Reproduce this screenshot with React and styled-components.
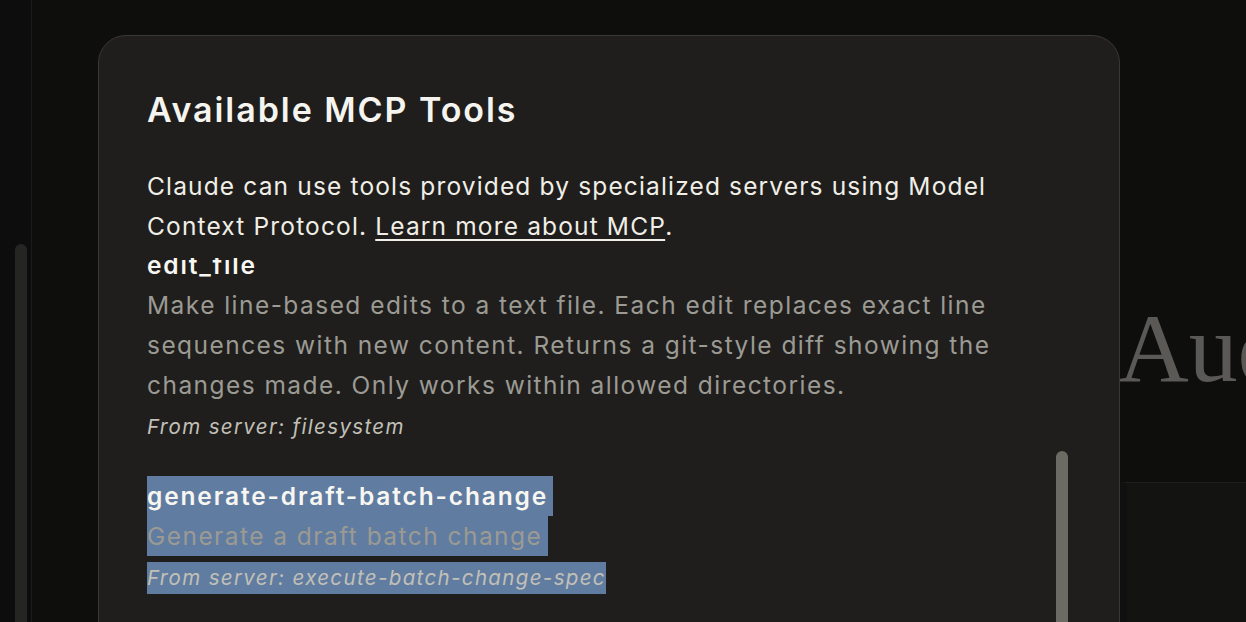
import React, { useLayoutEffect, useRef } from 'react'
import styled, { createGlobalStyle } from 'styled-components'

const GlobalStyle = createGlobalStyle`
  html, body {
    margin: 0;
    padding: 0;
    background: #0e0e0d;
    overflow: hidden;
  }
  * {
    box-sizing: border-box;
  }
`

const Page = styled.div`
  position: relative;
  display: flex;
  width: 1246px;
  height: 622px;
  overflow: hidden;
  font-family: Inter, "Noto Sans", sans-serif;
`

const Sidebar = styled.aside`
  width: 32px;
  flex-shrink: 0;
  padding: 244px 0 0 15px;
  background: #0d0d0d;
  border-right: 1px solid #1b1b1a;
`

const SidebarThumb = styled.div`
  width: 12px;
  height: 420px;
  border-radius: 6px;
  background: #252524;
`

const Main = styled.main`
  flex: 1;
  display: flex;
  flex-direction: column;
`

const Hero = styled.section`
  height: 482px;
  flex-shrink: 0;
  padding: 299px 0 0 1086px;
  overflow: hidden;
`

const HeroTitle = styled.h1`
  margin: 0;
  font-family: "Liberation Serif", "DejaVu Serif", serif;
  font-weight: 400;
  font-size: 98px;
  line-height: 1;
  color: #5a5955;
  white-space: nowrap;
`

const Lower = styled.section`
  flex: 1;
  margin-left: 1088px;
  background: #131312;
  border-top: 1px solid #1f1f1e;
  border-left: 7px solid #101011;
`

const Modal = styled.div`
  position: absolute;
  left: 98px;
  top: 35px;
  width: 1022px;
  height: 640px;
  display: flex;
  flex-direction: column;
  padding: 54px 92px 0 48px;
  background: #1f1e1d;
  border: 1px solid #393835;
  border-radius: 28px;
`

const Title = styled.h2`
  margin: 0;
  font-size: 34px;
  line-height: 40px;
  font-weight: 600;
  color: #f5f4ef;
  letter-spacing: 1.95px;
`

const Intro = styled.p`
  margin: 36px 0 0;
  font-size: 24.5px;
  line-height: 40px;
  color: #f0eee6;
  letter-spacing: 1.15px;
`

const Link = styled.a`
  color: inherit;
  text-decoration: underline;
  text-underline-offset: 4px;
  text-decoration-thickness: 2px;
`

const ToolList = styled.div`
  position: relative;
  flex: 1;
  margin-top: 12px;
  overflow: hidden;
`

const Tool = styled.div`
  margin-bottom: 33px;
`

const ToolName = styled.div`
  font-size: 24.5px;
  line-height: 40px;
  font-weight: 600;
  color: #f7f6f1;
  letter-spacing: 1.85px;
`

const ToolDesc = styled.div`
  font-size: 24.5px;
  line-height: 40px;
  color: #9b9a93;
  letter-spacing: 1.45px;
`

const ToolServer = styled.div`
  margin-top: 6px;
  font-size: 20.5px;
  line-height: 32px;
  font-style: italic;
  color: #c2c0b7;
  letter-spacing: 1.35px;
`

const Highlight = styled.span`
  display: inline-block;
  margin-left: -1px;
  padding: 0 ${(p) => p.$pad || 0}px 0 1px;
  background: #617ca1;
`

const ModalThumb = styled.div`
  position: absolute;
  right: 51px;
  top: 415px;
  width: 12px;
  height: 300px;
  border-radius: 6px;
  background: #6b6a63;
`

const tools = [
  {
    name: 'directory_tree',
    desc: "Get a recursive tree view of files and directories as a JSON structure. Each entry includes 'name', 'type' (file/directory), and 'children' for directories. Only works within allowed directories.",
    server: 'filesystem',
  },
  {
    name: 'edit_file',
    desc: 'Make line-based edits to a text file. Each edit replaces exact line sequences with new content. Returns a git-style diff showing the changes made. Only works within allowed directories.',
    server: 'filesystem',
    anchor: true,
  },
  {
    name: 'generate-draft-batch-change',
    desc: 'Generate a draft batch change',
    server: 'execute-batch-change-spec',
    selected: true,
  },
  {
    name: 'get_file_info',
    desc: 'Retrieve detailed metadata about a file or directory.',
    server: 'filesystem',
  },
]

const ToolEntry = ({ tool, innerRef }) => {
  const wrap = (text, pad) =>
    tool.selected ? <Highlight $pad={pad}>{text}</Highlight> : text
  return (
    <Tool ref={innerRef}>
      <ToolName>{wrap(tool.name, 5)}</ToolName>
      <ToolDesc>{wrap(tool.desc, 6)}</ToolDesc>
      <ToolServer>{wrap(`From server: ${tool.server}`, 0)}</ToolServer>
    </Tool>
  )
}

const App = () => {
  const listRef = useRef(null)
  const anchorRef = useRef(null)

  useLayoutEffect(() => {
    if (listRef.current && anchorRef.current) {
      listRef.current.scrollTop = anchorRef.current.offsetTop + 13
    }
  }, [])

  return (
    <>
      <GlobalStyle />
      <Page>
        <Sidebar>
          <SidebarThumb />
        </Sidebar>
        <Main>
          <Hero>
            <HeroTitle>Audio Settings</HeroTitle>
          </Hero>
          <Lower />
        </Main>
        <Modal role="dialog">
          <Title>Available MCP Tools</Title>
          <Intro>
            Claude can use tools provided by specialized servers using Model
            Context Protocol. <Link href="#">Learn more about MCP</Link>.
          </Intro>
          <ToolList ref={listRef}>
            {tools.map((tool) => (
              <ToolEntry
                key={tool.name}
                tool={tool}
                innerRef={tool.anchor ? anchorRef : undefined}
              />
            ))}
          </ToolList>
          <ModalThumb />
        </Modal>
      </Page>
    </>
  )
}

export default App
